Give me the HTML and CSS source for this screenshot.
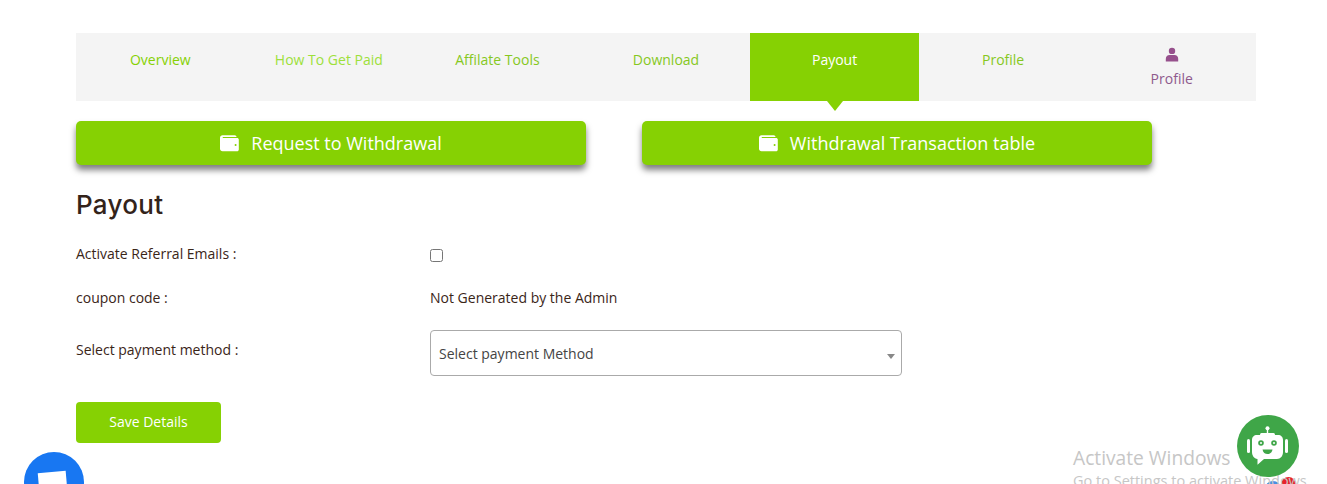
FILE: index.html
```html
<!DOCTYPE html>
<html lang="en">
<head>
<meta charset="utf-8">
<title>Payout</title>
<link rel="stylesheet" href="styles.css">
</head>
<body>
<main class="page">
  <nav class="tabs">
    <a class="tab tab-dark">Overview</a>
    <a class="tab tab-light">How To Get Paid</a>
    <a class="tab tab-mid">Affilate Tools</a>
    <a class="tab tab-mid">Download</a>
    <a class="tab tab-active">Payout</a>
    <a class="tab tab-mid">Profile</a>
    <a class="tab tab-user">
      <svg class="user-icon" viewBox="0 0 14 14" aria-hidden="true"><circle cx="7" cy="3.4" r="3.2"/><path d="M.8 14v-2.6C.8 9 2.400 7.400 4.600 7.400h4.800c2.200 0 3.800 1.600 3.800 4V14z"/></svg>
      <span>Profile</span>
    </a>
  </nav>
  <div class="actions">
    <button class="action">
      <svg class="wallet" viewBox="0 0 19 17" aria-hidden="true"><path fill-rule="evenodd" d="M2.500.3h12.300c1 0 1.700.7 1.700 1.700H3c-.5 0-.5.9 0 .9h14c1 0 1.800.7 1.800 1.700v9.800c0 1-.8 1.800-1.800 1.800H2.500C1.100 16.200 0 15.100 0 13.700V2.800C0 1.400 1.100.3 2.500.3zM15.600 9a1 1 0 1 0 0 2 1 1 0 0 0 0-2z"/></svg>
      <span>Request to Withdrawal</span>
    </button>
    <button class="action">
      <svg class="wallet" viewBox="0 0 19 17" aria-hidden="true"><path fill-rule="evenodd" d="M2.500.3h12.300c1 0 1.700.7 1.700 1.700H3c-.5 0-.5.9 0 .9h14c1 0 1.800.7 1.800 1.700v9.800c0 1-.8 1.800-1.800 1.800H2.500C1.100 16.200 0 15.100 0 13.700V2.800C0 1.400 1.100.3 2.500.3zM15.600 9a1 1 0 1 0 0 2 1 1 0 0 0 0-2z"/></svg>
      <span>Withdrawal Transaction table</span>
    </button>
  </div>
  <h1 class="title">Payout</h1>
  <form class="form">
    <label class="row row-check">
      <span>Activate Referral Emails :</span>
      <input class="check" type="checkbox">
    </label>
    <div class="row row-coupon">
      <span>coupon code :</span>
      <span>Not Generated by the Admin</span>
    </div>
    <label class="row row-select">
      <span class="select-label">Select payment method :</span>
      <span class="select-wrap">
        <select class="select"><option>Select payment Method</option></select>
      </span>
    </label>
    <button class="save" type="button">Save Details</button>
  </form>
</main>

<div class="fb-bubble"><span class="fb-glyph"></span></div>
<div class="mini-dots"><span class="dot-blue"></span><span class="dot-red"></span></div>
<div class="watermark">
  <div class="wm-title">Activate Windows</div>
  <div class="wm-sub">Go to Settings to activate Windows.</div>
</div>
<div class="bot">
  <svg viewBox="0 0 62 62" aria-hidden="true">
    <circle cx="30.500" cy="13.200" r="2" fill="#fff"/>
    <rect x="29.800" y="14" width="1.400" height="5" fill="#fff"/>
    <rect x="23" y="18" width="15" height="3" rx="1.500" fill="#fff"/>
    <path fill="#fff" d="M20 20h21c3 0 5 2 5 5v12c0 4-2.500 7-6 7H27l-6.500 5.800V44C17 43.500 15 40.500 15 37V25c0-3 2-5 5-5z"/>
    <rect x="10" y="24" width="3" height="14" rx="1.500" fill="#fff"/>
    <rect x="48" y="24" width="3" height="14" rx="1.500" fill="#fff"/>
    <circle cx="24" cy="28" r="2.800" fill="#3fa648"/>
    <circle cx="24" cy="28" r="1" fill="#fff"/>
    <circle cx="37" cy="28" r="2.800" fill="#3fa648"/>
    <circle cx="37" cy="28" r="1" fill="#fff"/>
    <path fill="#3fa648" d="M25.500 34.500h10c-.5 3-2.500 4.500-5 4.500s-4.500-1.500-5-4.500z"/>
  </svg>
</div>
</body>
</html>
```
FILE: styles.css
```css
* { box-sizing: border-box; }
html, body { margin: 0; height: 484px; overflow: hidden; background: #fff; }
body { font-family: "Open Sans", sans-serif; font-size: 14px; color: #3a2518; position: relative; }

.page { width: 1180px; margin-left: 76px; padding-top: 33px; }

.tabs { display: grid; grid-template-columns: repeat(7, 1fr); height: 68px; background: #f4f4f4; }
.tab { position: relative; display: flex; flex-direction: column; align-items: center; padding-top: 17px; line-height: 20px; }
.tab-dark { color: #86d103; }
.tab-light { color: #9de03a; }
.tab-mid { color: #86c81e; }
.tab-active { background: #86d103; color: #fff; }
.tab-active::after { content: ""; position: absolute; left: 50%; bottom: -10px; margin-left: -8px; border-left: 8px solid transparent; border-right: 8px solid transparent; border-top: 10px solid #86d103; }
.tab-user { color: #8f5a8d; padding-top: 14px; }
.user-icon { width: 14px; height: 15px; fill: #96508c; margin-bottom: 7px; }

.actions { display: grid; grid-template-columns: 510px 510px; column-gap: 56px; margin-top: 20px; }
.action { height: 44px; display: flex; align-items: center; justify-content: center; gap: 12px; border: 0; border-radius: 5px; background: #86d103; color: #fff; font: 18px "Open Sans", sans-serif; box-shadow: 0 5px 6px rgba(0, 0, 0, .5); }
.wallet { width: 19px; height: 17px; fill: #fff; }

.title { margin: 23px 0 0; font: 500 26px/34px "Inter", sans-serif; letter-spacing: .3px; color: #33231a; }

.form { margin-top: 22px; }
.row { display: grid; grid-template-columns: 354px 472px; }
.row-check { height: 20px; line-height: 20px; }
.check { margin: 5px 0 0; width: 13px; height: 13px; }
.row-coupon { margin-top: 24px; line-height: 20px; }
.row-select { margin-top: 22px; }
.select-label { line-height: 20px; margin-top: 10px; }
.select-wrap { position: relative; display: block; }
.select-wrap::after { content: ""; position: absolute; right: 7px; top: 24px; border-left: 4px solid transparent; border-right: 4px solid transparent; border-top: 5px solid #888; }
.select { display: block; width: 100%; height: 46px; padding: 0 8px; appearance: none; border: 1px solid #aaa; border-radius: 4px; background: #fff; color: #444; font: 14px "Open Sans", sans-serif; }
.save { display: block; width: 145px; height: 41px; margin-top: 26px; padding: 0 0 2px; border: 0; border-radius: 4px; background: #86d103; color: #fff; font: 14px "Open Sans", sans-serif; }

.fb-bubble { position: absolute; left: 24px; top: 452px; width: 60px; height: 60px; border-radius: 50%; background: #1877f2; overflow: hidden; }
.fb-glyph { position: absolute; left: 15px; top: 20px; width: 28px; height: 30px; background: #fff; transform: rotate(-5deg); }

.watermark { position: absolute; left: 1073px; top: 444px; color: #c6c6c6; white-space: nowrap; }
.wm-title { font-size: 19.2px; line-height: 27px; }
.wm-sub { font-size: 14.5px; line-height: 20px; }

.mini-dots { position: absolute; left: 1265px; top: 477px; display: flex; align-items: flex-start; }
.dot-blue { width: 16px; height: 16px; margin-top: 4px; border-radius: 50%; background: #4a90e2; }
.dot-red { width: 15px; height: 15px; border-radius: 50%; background: #e8232a; }

.bot { position: absolute; left: 1237px; top: 415px; width: 62px; height: 62px; border-radius: 50%; background: #3fa648; }
.bot svg { display: block; width: 62px; height: 62px; }
```
